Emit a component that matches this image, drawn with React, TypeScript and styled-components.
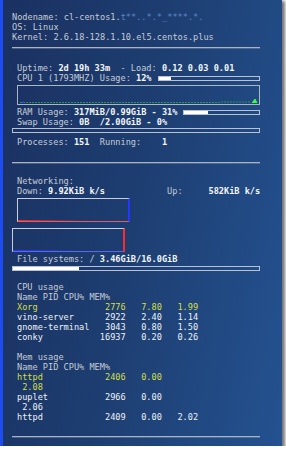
import React from 'react';
import styled, { createGlobalStyle } from 'styled-components';

const GlobalStyle = createGlobalStyle`
    html, body {
        margin: 0;
        padding: 0;
        background: #ffffff;
    }
`;

const Panel = styled.div`
    width: 282px;
    height: 446px;
    box-sizing: border-box;
    border-left: 3px solid #1d4cf2;
    padding: 12px 22px 0 9px;
    background: linear-gradient(100deg, #1a3161 0%, #1d3d70 45%, #245290 100%);
    box-shadow: 2px 2px 3px 1px rgba(0, 0, 0, 0.55);
    font-family: 'DejaVu Sans Mono', 'Liberation Mono', monospace;
    font-size: 8.6px;
    color: #c6ccd6;
    overflow: hidden;
`;

const Line = styled.div<{ $indent?: boolean; $mt?: number; $color?: string }>`
    white-space: pre;
    height: 10px;
    line-height: 10px;
    padding-left: ${(p) => (p.$indent ? 5 : 0)}px;
    margin-top: ${(p) => p.$mt ?? 0}px;
    color: ${(p) => p.$color ?? 'inherit'};
`;

const Value = styled.span`
    color: #f4f6fa;
    font-weight: bold;
`;

const Rule = styled.div<{ $mt: number }>`
    height: 1px;
    margin-top: ${(p) => p.$mt}px;
    background: #aab3c2;
    box-shadow: 0 1px 0 rgba(160, 170, 190, 0.35);
`;

const BarRow = styled.div<{ $mt?: number }>`
    display: flex;
    align-items: center;
    height: 10px;
    padding-left: 5px;
    margin-top: ${(p) => p.$mt ?? 0}px;
    white-space: pre;
    line-height: 10px;
`;

const Bar = styled.div<{ $mt?: number }>`
    flex: 1;
    height: 5px;
    box-sizing: border-box;
    border: 1px solid #b9c2d0;
    margin-top: ${(p) => p.$mt ?? 0}px;
`;

const InlineBar = styled(Bar)`
    margin-left: 6px;
`;

const Fill = styled.div`
    height: 100%;
    background: #ffffff;
`;

const CpuGraph = styled.div`
    margin: 2px 0 0 5px;
    height: 20px;
    box-sizing: border-box;
    border: 1px solid #aab5c6;
    svg {
        display: block;
    }
`;

const NetGraph = styled.div<{ $kind: 'down' | 'up'; $mt: number }>`
    width: 113px;
    height: 24px;
    box-sizing: border-box;
    margin-top: ${(p) => p.$mt}px;
    margin-left: ${(p) => (p.$kind === 'down' ? 5 : 0)}px;
    border: 1px solid #c9d0dc;
    border-right: 2px solid ${(p) => (p.$kind === 'down' ? '#2438ff' : '#ff2a2a')};
    border-bottom-color: ${(p) => (p.$kind === 'down' ? '#e05a6a' : '#5a66f0')};
    background: linear-gradient(
            to right,
            ${(p) => (p.$kind === 'down' ? '#ff2a2a' : '#2a3cff')} 0%,
            ${(p) => (p.$kind === 'down' ? 'rgba(255,42,42,0.5)' : 'rgba(42,60,255,0.5)')} 30%,
            transparent 60%
        )
        bottom / 100% 1px no-repeat;
`;

const cpuRows = [
    'vino-server      2922   2.40   1.14',
    'gnome-terminal   3043   0.80   1.50',
    'conky           16937   0.20   0.26',
];

const CpuTrace = () => {
    const pts: string[] = [];
    for (let x = 2; x < 236; x += 3) {
        pts.push(`${x},${16.5 - (x > 200 ? 0.5 : 0)}`);
    }
    return (
        <svg width="240" height="18" viewBox="0 0 240 18">
            <polyline
                points={pts.join(' ')}
                fill="none"
                stroke="#2fae3a"
                strokeWidth="1"
                strokeDasharray="2 1"
                opacity="0.8"
            />
            <polyline points="234,17 237,13 239,17" fill="#3cff3c" stroke="#3cff3c" strokeWidth="1" />
            <rect x="4" y="15.5" width="2" height="1.5" fill="#2a40ff" />
        </svg>
    );
};

const App = () => {
    return (
        <Panel>
            <GlobalStyle />
            <Line>Nodename: cl-centos1.<span style={{ color: '#5e86c8' }}>t**..*.*_****.*.</span></Line>
            <Line>OS: Linux</Line>
            <Line>Kernel: 2.6.18-128.1.10.el5.centos.plus</Line>
            <Rule $mt={5} />

            <Line $indent $mt={15}>
                Uptime: <Value>2d 19h 33m</Value>  - Load: <Value>0.12 0.03 0.01</Value>
            </Line>
            <BarRow>
                <span>
                    CPU 1 (1793MHZ) Usage: <Value>12%</Value>
                </span>
                <InlineBar>
                    <Fill style={{ width: '12%' }} />
                </InlineBar>
            </BarRow>
            <CpuGraph>
                <CpuTrace />
            </CpuGraph>
            <BarRow $mt={2}>
                <span>
                    RAM Usage: <Value>317MiB/0.99GiB - 31%</Value>
                </span>
                <InlineBar>
                    <Fill style={{ width: '31%' }} />
                </InlineBar>
            </BarRow>
            <Line $indent>
                Swap Usage: <Value>0B  /2.00GiB - 0%</Value>
            </Line>
            <Bar $mt={1} />
            <Line $indent $mt={4}>
                Processes: <Value>151</Value>  Running:    <Value>1</Value>
            </Line>
            <Rule $mt={15} />

            <Line $indent $mt={13}>Networking:</Line>
            <Line $indent>
                Down: <Value>9.92KiB k/s</Value>            Up:    <Value> 582KiB k/s</Value>
            </Line>
            <NetGraph $kind="down" $mt={2} />
            <NetGraph $kind="up" $mt={6} />
            <Line $indent $mt={2}>
                File systems: / <Value>3.46GiB/16.0GiB</Value>
            </Line>
            <Bar $mt={2}>
                <Fill style={{ width: '27%' }} />
            </Bar>

            <Line $indent $mt={11}>CPU usage</Line>
            <Line $indent>Name PID CPU% MEM%</Line>
            <Line $indent $color="#d3df45">Xorg             2776   7.80   1.99</Line>
            {cpuRows.map((r) => (
                <Line $indent key={r} $color="#eef1f6">
                    {r}
                </Line>
            ))}

            <Line $indent $mt={10}>Mem usage</Line>
            <Line $indent>Name PID CPU% MEM%</Line>
            <Line $indent $color="#d3df45">httpd            2406   0.00</Line>
            <Line $indent $color="#d3df45"> 2.08</Line>
            <Line $indent $color="#eef1f6">puplet           2966   0.00</Line>
            <Line $indent $color="#eef1f6"> 2.06</Line>
            <Line $indent $color="#eef1f6">httpd            2409   0.00   2.02</Line>
            <Rule $mt={14} />
        </Panel>
    );
};

export default App;
